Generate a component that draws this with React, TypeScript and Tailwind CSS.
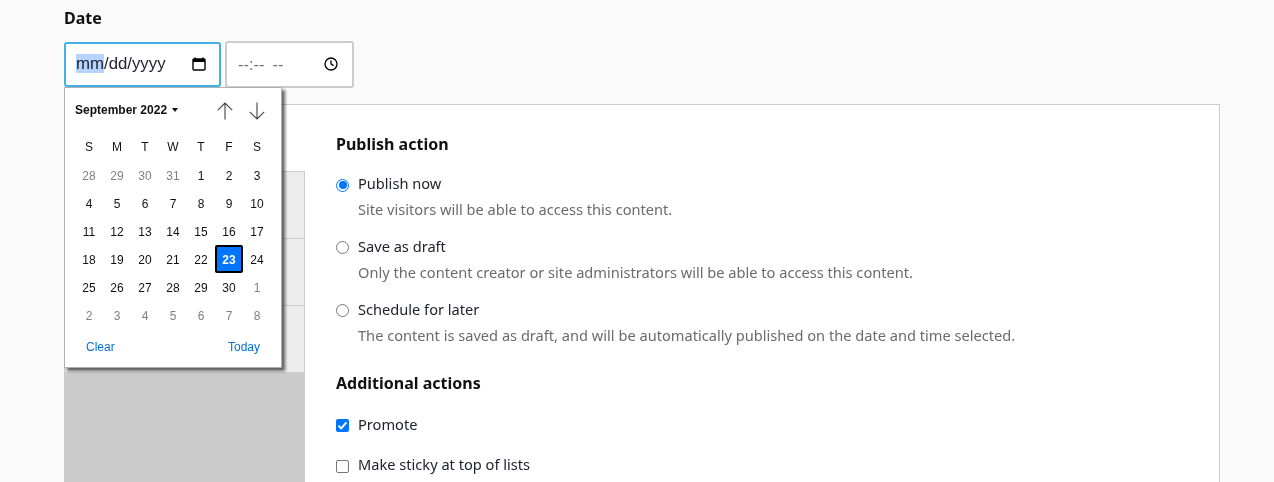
import React from "react";

const Cal = () => (
  <svg width="14" height="14" viewBox="0 0 14 14" className="block">
    <path d="M3 .5v2M11 .5v2" stroke="#000" strokeWidth="1.6" />
    <rect x="1" y="2" width="12" height="11" rx="1" fill="none" stroke="#000" strokeWidth="1.4" />
    <rect x="1" y="2" width="12" height="3" fill="#000" />
  </svg>
);
const Clock = () => (
  <svg width="14" height="14" viewBox="0 0 14 14" className="block" fill="none" stroke="#000" strokeWidth="1.3">
    <circle cx="7" cy="7" r="6" />
    <path d="M7 3.5V7l2.6 1.6" />
  </svg>
);
const Arrow = ({ down }: { down?: boolean }) => (
  <svg width="16" height="18" viewBox="0 0 16 18" fill="none" stroke="#444" strokeWidth="1.1" className="block">
    {down ? <path d="M8 .5v16.5M.8 9.8 8 17l7.2-7.2" /> : <path d="M8 17.5V1M.8 8.2 8 1l7.2 7.2" />}
  </svg>
);

const weeks: [string, boolean][][] = [
  [["28", true], ["29", true], ["30", true], ["31", true], ["1", false], ["2", false], ["3", false]],
  [["4", false], ["5", false], ["6", false], ["7", false], ["8", false], ["9", false], ["10", false]],
  [["11", false], ["12", false], ["13", false], ["14", false], ["15", false], ["16", false], ["17", false]],
  [["18", false], ["19", false], ["20", false], ["21", false], ["22", false], ["23", false], ["24", false]],
  [["25", false], ["26", false], ["27", false], ["28", false], ["29", false], ["30", false], ["1", true]],
  [["2", true], ["3", true], ["4", true], ["5", true], ["6", true], ["7", true], ["8", true]],
];

const Radio = ({ on }: { on?: boolean }) =>
  on ? (
    <span className="block w-[13px] h-[13px] mt-[2px] rounded-full border border-[#0075ff] bg-white p-[1.5px] shrink-0">
      <span className="block w-full h-full rounded-full bg-[#0075ff]" />
    </span>
  ) : (
    <span className="block w-[13px] h-[13px] mt-[1px] rounded-full border border-[#767676] bg-white shrink-0" />
  );

const Option = ({ on, label, desc }: { on?: boolean; label: string; desc: string }) => (
  <div className="h-[63px]">
    <div className="flex items-center h-[24px] gap-[9px]">
      <Radio on={on} />
      <span className="text-[14.62px] text-[#222330]">{label}</span>
    </div>
    <div className="pl-[22px] mt-[1px] h-[24px] leading-[24px] text-[14.62px] text-[#6b6b6b]">{desc}</div>
  </div>
);

const Row = () => <div className="h-[67px] border-t border-r border-[#cccccc] bg-[#ececec]" />;

export default function App() {
  return (
    <div className="relative w-[1274px] h-[482px] overflow-hidden bg-[#fafafa]">
      <div className="[will-change:transform] pl-[64px] pr-[54px] font-['Noto_Sans',sans-serif]">
        <div className="h-[37px] pt-[6px] text-[16px] font-bold leading-[24px] text-[#111]">Date</div>
        <div className="flex gap-[4px] h-[47px] items-start">
          <div className="w-[157px] h-[45px] mt-[5px] rounded-[3px] border-2 border-[#40b0e6] bg-white flex items-center pl-[10px] pr-[13px] font-['Liberation_Sans',sans-serif] text-[16.8px] leading-[19px] text-[#222330]">
            <span className="bg-[#b5d5ff] mb-[3px]">mm</span>
            <span className="mb-[3px]">/dd/yyyy</span>
            <span className="ml-auto mb-[1px]"><Cal /></span>
          </div>
          <div className="w-[129px] h-[47px] mt-[4px] rounded-[3px] border-2 border-[#cccccc] bg-white flex items-center pl-[11px] pr-[14px] font-['Liberation_Sans',sans-serif] text-[16.5px] text-[#757575]">
            <span className="whitespace-pre">--:--</span>
            <span className="ml-[8px] whitespace-pre">--</span>
            <span className="ml-auto mb-[1px]"><Clock /></span>
          </div>
        </div>

        <div className="mt-[20px] flex h-[500px] border border-[#cccccc] bg-white">
          <div className="w-[240px] shrink-0 flex flex-col">
            <div className="h-[66px]" />
            <Row />
            <Row />
            <Row />
            <div className="flex-1 bg-[#cccccc]" />
          </div>
          <div className="pl-[31px] pt-[27px]">
            <div className="text-[16px] font-bold leading-[24px] text-[#111] mb-[16px]">Publish action</div>
            <Option on label="Publish now" desc="Site visitors will be able to access this content." />
            <Option label="Save as draft" desc="Only the content creator or site administrators will be able to access this content." />
            <Option label="Schedule for later" desc="The content is saved as draft, and will be automatically published on the date and time selected." />
            <div className="text-[16px] font-bold leading-[24px] text-[#111] mt-[10px] mb-[18px]">Additional actions</div>
            <div className="flex items-center h-[24px] gap-[9px] mb-[16px]">
              <span className="w-[13px] h-[13px] rounded-[2px] bg-[#0075ff] flex items-center justify-center shrink-0">
                <svg width="11" height="11" viewBox="0 0 11 11" fill="none" stroke="#fff" strokeWidth="2"><path d="M1.5 5.8 4.2 8.4 9.5 2.4" /></svg>
              </span>
              <span className="text-[14.62px] text-[#222330]">Promote</span>
            </div>
            <div className="flex items-center h-[24px] gap-[9px]">
              <span className="w-[13px] h-[13px] mt-[3px] rounded-[2px] border border-[#767676] bg-white shrink-0" />
              <span className="text-[14.62px] text-[#222330]">Make sticky at top of lists</span>
            </div>
          </div>
        </div>
      </div>

      <div className="absolute left-[64px] top-[87px] w-[218px] h-[281px] bg-white border border-[#b0b0b0] shadow-[3px_3px_3px_rgba(0,0,0,0.6)]">
        <div className="[will-change:transform] px-[10px] font-['Liberation_Sans',sans-serif] text-[12px] text-[#111]">
          <div className="flex items-center h-[44px]">
            <span className="font-bold">September 2022</span>
            <span className="ml-[5px] w-0 h-0 border-x-[3.5px] border-x-transparent border-t-[4px] border-t-[#111]" />
            <span className="ml-auto mt-[2px] flex gap-[16px] pr-[6px]"><Arrow /><Arrow down /></span>
          </div>
          <div className="grid grid-cols-[repeat(7,28px)] mt-[1px]">
            {["S", "M", "T", "W", "T", "F", "S"].map((d, i) => (
              <div key={i} className="h-[28px] flex items-center justify-center">{d}</div>
            ))}
            {weeks.flat().map(([d, muted], i) => {
              const sel = i === 26;
              return (
                <div
                  key={i}
                  className={
                    sel
                      ? "h-[28px] pt-[2px] flex items-center justify-center bg-[#0075ff] text-white font-bold border-2 border-black rounded-[2px]"
                      : muted
                      ? "h-[28px] pt-[2px] flex items-center justify-center text-[#808080]"
                      : "h-[28px] pt-[2px] flex items-center justify-center"
                  }
                >
                  {d}
                </div>
              );
            })}
          </div>
          <div className="flex justify-between pl-[11px] pr-[11px] mt-[9px] text-[#0070d8]">
            <span>Clear</span>
            <span>Today</span>
          </div>
        </div>
      </div>
    </div>
  );
}
